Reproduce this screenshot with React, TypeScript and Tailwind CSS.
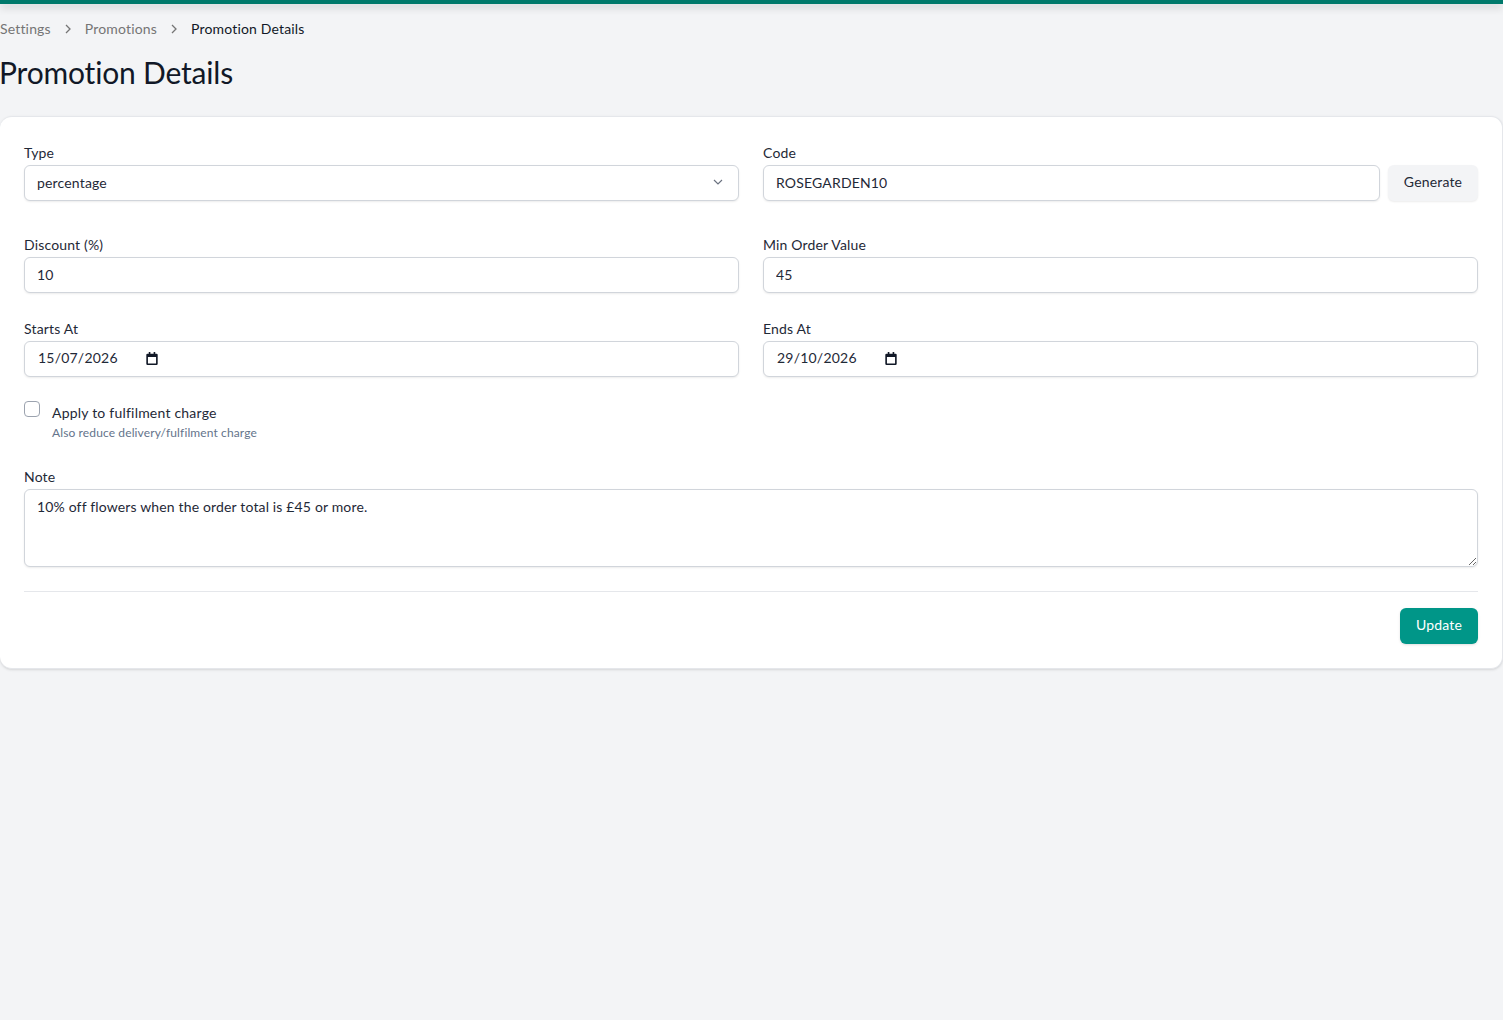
import React from "react";

const box = "rounded-md border border-[#d1d5db] bg-white text-sm text-[#1f2937] shadow-[0_1px_2px_rgba(0,0,0,0.08)] outline-none";
const input = "block w-full h-9 px-3 pb-px tracking-[0.012em] " + box;
const label = "block text-sm text-[#1f2937] leading-5 mb-0.5 tracking-[0.012em]";

function Field({ name, children }: { name: string; children: React.ReactNode }) {
  return (
    <div>
      <label className={label}>{name}</label>
      {children}
    </div>
  );
}

function Chevron() {
  return (
    <svg className="mx-[14px] w-[6px] h-[10px] shrink-0" viewBox="0 0 6 10" fill="none" stroke="#757575" strokeWidth="1.3">
      <path d="m1 1 4 4-4 4" />
    </svg>
  );
}

function DateBox({ value }: { value: string }) {
  return (
    <div className={"flex items-center h-9 pl-[13px] pb-[2px] tracking-[0.015em] " + box}>
      <span>{value}</span>
      <svg className="ml-[28px] w-[12px] h-[13px]" viewBox="0 0 14 16" fill="#111827">
        <path d="M3 0h2v2h4V0h2v2h1.500A1.500 1.500 0 0 1 14 3.500v11a1.500 1.500 0 0 1-1.500 1.500h-11A1.500 1.500 0 0 1 0 14.500v-11A1.500 1.500 0 0 1 1.500 2H3V0Zm-1 6v8h10V6H2Z" />
      </svg>
    </div>
  );
}

export default function App() {
  return (
    <div className="min-h-[1020px] bg-[#f3f4f6] font-['Lato',sans-serif] text-[#1f2937]">
      <div className="h-1 bg-[#00796b] shadow-[0_3px_8px_rgba(0,0,0,0.2)]" />
      <nav className="flex items-center h-5 mt-[15px] text-sm text-[#757575] tracking-[0.012em]">
        <span>Settings</span>
        <Chevron />
        <span>Promotions</span>
        <Chevron />
        <span className="text-[#111827]">Promotion Details</span>
      </nav>
      <h1 className="mt-[15px] -ml-px text-3xl leading-9 text-[#111827] tracking-[-0.006em]">Promotion Details</h1>
      <div className="mt-[26px] rounded-xl border border-[#e5e7eb] border-l-0 bg-white pl-6 pr-6 pt-[26px] pb-6 shadow-sm">
        <div className="grid grid-cols-2 gap-x-6">
          <Field name="Type">
            <div className="relative">
              <select className={input + " appearance-none pb-[3px]"} defaultValue="percentage">
                <option>percentage</option>
              </select>
              <svg className="absolute right-[13px] top-[9px] w-4 h-4" viewBox="0 0 24 24" fill="none" stroke="#6b7280" strokeWidth="1.75">
                <path d="m6 9 6 6 6-6" />
              </svg>
            </div>
          </Field>
          <Field name="Code">
            <div className="flex gap-2">
              <input className={input} defaultValue="ROSEGARDEN10" />
              <button className="h-9 w-[90px] shrink-0 rounded-md bg-[#f3f4f6] pb-[3px] text-sm tracking-[0.012em] shadow-[0_1px_2px_rgba(0,0,0,0.08)]">Generate</button>
            </div>
          </Field>
        </div>
        <div className="grid grid-cols-2 gap-x-6 gap-y-[26px] mt-[34px]">
          <Field name="Discount (%)"><input className={input} defaultValue="10" /></Field>
          <Field name="Min Order Value"><input className={input} defaultValue="45" /></Field>
          <Field name="Starts At"><DateBox value="15/07/2026" /></Field>
          <Field name="Ends At"><DateBox value="29/10/2026" /></Field>
        </div>
        <div className="flex gap-3 mt-6">
          <input type="checkbox" className="w-4 h-4 appearance-none rounded border border-[#9ca3af] bg-white" />
          <div className="mt-0.5">
            <div className="text-sm leading-5 tracking-[0.015em]">Apply to fulfilment charge</div>
            <div className="text-xs leading-4 text-[#64748b] mt-[2px] tracking-[0.01em]">Also reduce delivery/fulfilment charge</div>
          </div>
        </div>
        <div className="mt-[26px]">
          <label className={label}>Note</label>
          <textarea className={"block w-full h-[78px] px-3 pt-[7px] pb-2 tracking-[0.011em] " + box} defaultValue="10% off flowers when the order total is £45 or more." />
        </div>
        <div className="mt-6 border-t border-[#e5e7eb] pt-4 flex justify-end">
          <button className="h-9 w-[78px] rounded-md bg-[#009688] pb-[3px] text-white text-sm tracking-[0.012em] shadow-sm">Update</button>
        </div>
      </div>
    </div>
  );
}
